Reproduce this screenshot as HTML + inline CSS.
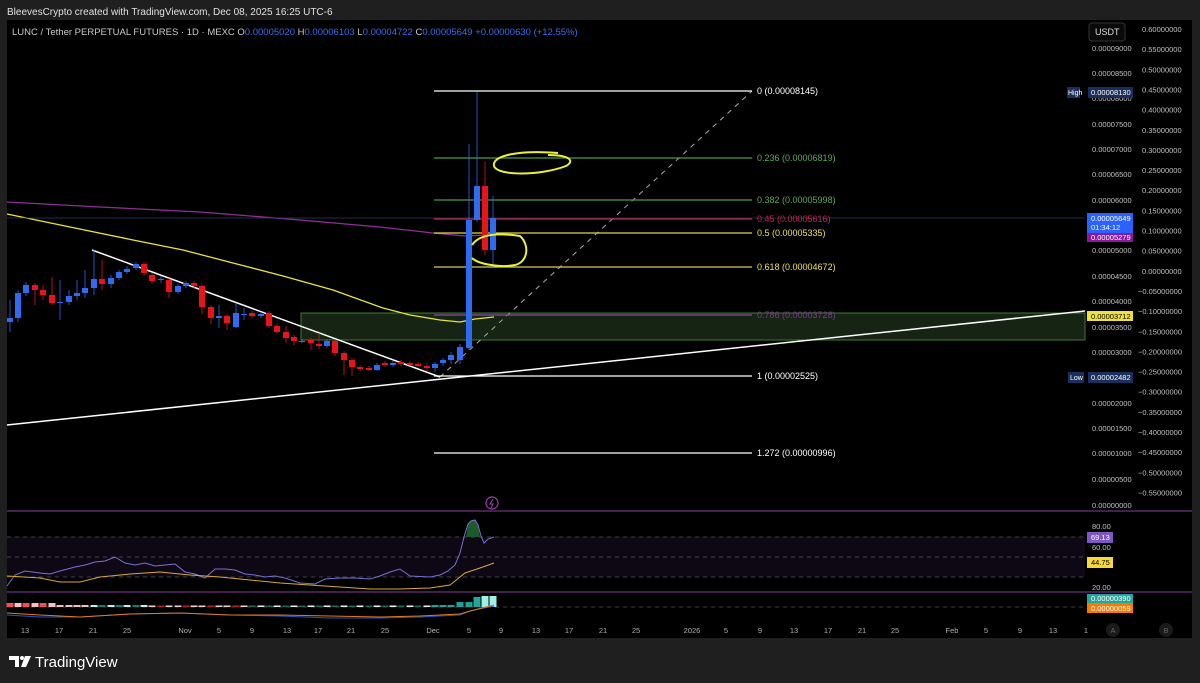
<!DOCTYPE html>
<html><head><meta charset="utf-8"><style>
html,body{margin:0;padding:0;background:#1f1f1f;width:1200px;height:683px;overflow:hidden;font-family:"Liberation Sans",sans-serif}
svg text{font-family:"Liberation Sans",sans-serif}
</style></head><body>
<svg id="s" width="1200" height="683" xmlns="http://www.w3.org/2000/svg">
<rect x="0" y="0" width="1200" height="683" fill="#1f1f1f"/>
<text x="7" y="15" font-size="10" fill="#e0e0e0">BleevesCrypto created with TradingView.com, Dec 08, 2025 16:25 UTC-6</text>
<rect x="7" y="20" width="1185" height="618" fill="#000"/>
<text x="12" y="35" font-size="9.5" fill="#c8c8c8">LUNC / Tether PERPETUAL FUTURES · 1D · MEXC  O<tspan fill="#3a6cf0">0.00005020</tspan>  H<tspan fill="#3a6cf0">0.00006103</tspan>  L<tspan fill="#3a6cf0">0.00004722</tspan>  C<tspan fill="#3a6cf0">0.00005649</tspan>  <tspan fill="#3a6cf0">+0.00000630 (+12.55%)</tspan></text>
<!-- zone -->
<rect x="301" y="313" width="784" height="27" fill="#152413" stroke="#3f7a34" stroke-width="1"/>
<!-- MAs -->
<polyline points="7,214 70,227 133,240 183,250 233,263 283,276 333,290 383,308 410,315 440,320 460,322 475,319 494,317" fill="none" stroke="#e9e43a" stroke-width="1.3"/>
<polyline points="7,202 100,207 200,212 300,220 380,227 433,233 465,236 490,235" fill="none" stroke="#8e2f96" stroke-width="1.3"/>
<line x1="7" y1="218" x2="1085" y2="218" stroke="#2a3b66" stroke-width="0.8"/>
<!-- trendlines -->
<line x1="92" y1="250" x2="440" y2="377" stroke="#fff" stroke-width="1.5"/>
<line x1="7" y1="425" x2="1085" y2="311" stroke="#fff" stroke-width="1.5"/>
<line x1="440" y1="377" x2="752" y2="91" stroke="#aaa" stroke-width="1" stroke-dasharray="5,5"/>
<!-- fib -->
<g stroke-width="1.3">
<line x1="434" y1="91" x2="752" y2="91" stroke="#fff"/>
<line x1="434" y1="158" x2="752" y2="158" stroke="#4e9a4e"/>
<line x1="434" y1="200" x2="752" y2="200" stroke="#4e9a4e"/>
<line x1="434" y1="219" x2="752" y2="219" stroke="#c22656"/>
<line x1="434" y1="233" x2="752" y2="233" stroke="#e2d24a"/>
<line x1="434" y1="267" x2="752" y2="267" stroke="#d9c56a"/>
<line x1="434" y1="315" x2="752" y2="315" stroke="#8b4aa8"/>
<line x1="434" y1="376" x2="752" y2="376" stroke="#fff"/>
<line x1="434" y1="453" x2="752" y2="453" stroke="#fff"/>
</g>
<g font-size="9">
<text x="757" y="94" fill="#fff">0 (0.00008145)</text>
<text x="757" y="161" fill="#5fa85f">0.236 (0.00006819)</text>
<text x="757" y="203" fill="#5fa85f">0.382 (0.00005998)</text>
<text x="757" y="222" fill="#c22656">0.45 (0.00005616)</text>
<text x="757" y="236" fill="#f0e050">0.5 (0.00005335)</text>
<text x="757" y="270" fill="#f0e050">0.618 (0.00004672)</text>
<text x="757" y="318" fill="#7a3a90">0.786 (0.00003728)</text>
<text x="757" y="379" fill="#fff">1 (0.00002525)</text>
<text x="757" y="456" fill="#fff">1.272 (0.00000996)</text>
</g>
<g id="candles"></g>
<!-- yellow drawings -->
<path d="M558,153 C520,150 492,155 494,166 C497,176 540,176 566,166 C575,161 570,155 548,155" fill="none" stroke="#e8f03a" stroke-width="2"/>
<path d="M472,245 C480,233 500,233 520,236 C530,245 528,262 515,265 C500,268 478,264 472,258" fill="none" stroke="#e8f03a" stroke-width="2"/>
<!-- lightning -->
<circle cx="492" cy="503" r="6" fill="none" stroke="#a040b0" stroke-width="1.2"/>
<path d="M493,499 L490,504 L493,504 L491,508" fill="none" stroke="#a040b0" stroke-width="1"/>
<!-- separators -->
<line x1="7" y1="511" x2="1192" y2="511" stroke="#5a2a6a" stroke-width="1.5"/>
<line x1="7" y1="592" x2="1192" y2="592" stroke="#5a2a6a" stroke-width="1.5"/>
<rect x="7" y="537" width="1078" height="40" fill="#0d0814"/>
<g stroke="#555" stroke-dasharray="4,4" stroke-width="0.8">
<line x1="7" y1="537" x2="1085" y2="537"/><line x1="7" y1="557" x2="1085" y2="557"/><line x1="7" y1="577" x2="1085" y2="577"/>
<line x1="7" y1="607" x2="1085" y2="607"/></g>
<path d="M466,537 L468,524 L471,521 L475,520 L478,526 L480,537Z" fill="#1e5a2a"/>
<polyline points="7,586 15,575 25,571 40,573 50,574 60,571 75,567 85,565 95,562 105,561 115,557 125,563 135,565 145,563 155,566 165,565 175,564 185,572 195,574 205,578 215,569 225,569 235,570 245,574 255,575 265,577 275,576 285,578 300,583 315,584 325,579 340,578 355,578 370,579 380,576 390,572 400,569 410,576 430,577 440,575 448,571 455,565 460,553 464,537 468,524 471,521 475,520 478,525 481,536 484,543 488,539 494,537" fill="none" stroke="#7b6fd6" stroke-width="1"/>
<polyline points="7,576 40,578 60,582 80,582 100,577 130,574 160,572 190,575 220,577 250,580 280,583 310,585 340,587 370,589 400,589 430,588 450,585 465,573 480,568 494,563" fill="none" stroke="#d8a838" stroke-width="1"/>
<g id="hist"></g>
<polyline points="7,615 40,617 80,617 130,614 180,613 230,615 280,616 330,618 380,618 420,617 460,615 470,611 494,606" fill="none" stroke="#2a50c0" stroke-width="1"/>
<polyline points="7,613 40,615 80,617 130,614 180,613 230,615 280,615 330,616 380,617 420,616 460,614 470,611 494,605" fill="none" stroke="#e07a20" stroke-width="1"/>
<!-- right axis -->
<g font-size="7.5" fill="#c0c0c0" id="ax1"></g>
<g font-size="7.5" fill="#c0c0c0" id="ax2"></g>
<rect x="1089" y="23" width="36" height="18" rx="3" fill="#0a0a0a" stroke="#333"/>
<text x="1095" y="35" font-size="9" fill="#ddd">USDT</text>
<rect x="1067" y="87" width="13" height="11" fill="#1a2f5c"/><text x="1068" y="95" font-size="7" fill="#fff">High</text>
<rect x="1088" y="87" width="45" height="11" fill="#1a2f5c"/><text x="1091" y="95" font-size="7.5" fill="#fff">0.00008130</text>
<rect x="1068" y="372" width="16" height="11" fill="#1a2f5c"/><text x="1070" y="380" font-size="7" fill="#fff">Low</text>
<rect x="1088" y="372" width="45" height="11" fill="#1a2f5c"/><text x="1091" y="380" font-size="7.5" fill="#fff">0.00002482</text>
<rect x="1087" y="213" width="46" height="20" fill="#2962ff"/><text x="1091" y="221" font-size="7.5" fill="#fff">0.00005649</text><text x="1091" y="230" font-size="7.5" fill="#fff">01:34:12</text>
<rect x="1087" y="233" width="46" height="9" fill="#8a1a9a"/><text x="1091" y="240" font-size="7.5" fill="#fff">0.00005279</text>
<rect x="1087" y="311" width="46" height="10" fill="#f0e040"/><text x="1091" y="319" font-size="7.5" fill="#000">0.00003712</text>
<text x="1092" y="529" font-size="7.5" fill="#c0c0c0">80.00</text>
<rect x="1087" y="532" width="26" height="11" fill="#7e57c2"/><text x="1091" y="540" font-size="7.5" fill="#fff">69.13</text>
<text x="1092" y="550" font-size="7.5" fill="#c0c0c0">60.00</text>
<rect x="1087" y="557" width="26" height="11" fill="#f5d83a"/><text x="1091" y="565" font-size="7.5" fill="#000">44.75</text>
<text x="1092" y="590" font-size="7.5" fill="#c0c0c0">20.00</text>
<rect x="1087" y="594" width="46" height="9" fill="#26a69a"/><text x="1091" y="601" font-size="7.5" fill="#fff">0.00000390</text>
<rect x="1087" y="603" width="46" height="10" fill="#f57c00"/><text x="1091" y="611" font-size="7.5" fill="#fff">0.00000059</text>
<!-- time axis -->
<g font-size="7.5" fill="#b0b0b0" text-anchor="middle" id="tx"></g>
<circle cx="1113" cy="630" r="7" fill="#1a1a1a"/><text x="1113" y="633" font-size="7.5" fill="#666" text-anchor="middle">A</text>
<circle cx="1166" cy="630" r="7" fill="#1a1a1a"/><text x="1166" y="633" font-size="7.5" fill="#666" text-anchor="middle">B</text>
<!-- logo -->
<path d="M9,656 h10 v11 h-4 v-7 h-6z" fill="#fff"/><circle cx="22" cy="658" r="2" fill="#fff"/><path d="M25,656 h6 l-5,11 h-5z" fill="#fff"/>
<text x="35" y="667" font-size="15" fill="#fff">TradingView</text>
</svg>
<script>
var NS="http://www.w3.org/2000/svg";
function el(p,t,a){var e=document.createElementNS(NS,t);for(var k in a)e.setAttribute(k,a[k]);document.getElementById(p).appendChild(e);return e;}
var B="#2f6bf0",R="#e8141a";
var c=[[10,318,322,300,332,B],[18,293,318,290,322,B],[26,285,293,282,296,B],[35,285,290,283,305,R],[43,290,295,285,300,R],[52,295,303,277,305,R],[60,302,303,280,320,B],[69,296,302,290,305,B],[77,293,296,280,300,B],[85,288,293,270,298,B],[94,279,288,250,295,B],[102,279,284,260,290,R],[111,278,284,275,288,B],[119,272,278,270,280,B],[127,269,272,266,274,B],[136,264,268,262,270,B],[144,264,273,262,276,R],[152,275,281,273,284,R],[161,279,280,276,283,B],[169,280,292,278,298,R],[178,286,292,284,294,B],[186,283,286,281,288,B],[194,283,286,281,289,R],[202,286,307,284,314,R],[211,307,318,305,324,R],[219,316,318,305,328,B],[227,316,323,314,330,R],[236,313,327,303,328,B],[244,314,315,308,320,B],[252,313,316,311,318,R],[261,314,316,312,318,B],[269,313,326,311,328,R],[277,326,332,324,334,R],[286,332,338,326,343,R],[294,337,341,335,345,R],[302,341,342,339,343,B],[311,340,343,338,350,R],[319,344,346,333,349,R],[327,341,346,339,348,B],[335,341,353,339,356,R],[344,353,360,351,375,R],[352,360,367,358,376,R],[360,367,369,365,371,R],[369,368,370,366,371,R],[377,365,370,363,371,B],[385,363,365,361,367,R],[393,363,365,361,367,B],[401,362,364,360,366,R],[410,363,365,361,366,R],[418,364,366,362,367,R],[427,366,368,363,371,R],[435,364,368,362,372,B],[443,360,363,358,366,B],[451,355,360,352,364,B],[460,347,360,344,364,B],[469,220,348,144,350,B],[477,186,220,92,222,B],[485,186,250,162,255,R],[493,218,250,196,265,B]];
c.forEach(function(d){el("candles","line",{x1:d[0],x2:d[0],y1:d[3],y2:d[4],stroke:d[5],"stroke-width":0.8});el("candles","rect",{x:d[0]-3,y:d[1],width:6,height:Math.max(1,d[2]-d[1]),fill:d[5]});});
for(var i=0;i<c.length;i++){var x=c[i][0],h,col;if(x<60){h=4;col=i%2?"#f4c0c0":"#f05050"}else if(x<90){h=2;col="#f0c0c0"}else if(x<150){h=2;col=i%2?"#1b7a6a":"#c0f0e8"}else if(x<250){h=1.5;col=i%3?"#f0d0d0":"#b02020"}else if(x<430){h=1.5;col=i%2?"#1b6a5a":"#eee"}else{h=x<460?2:(x<470?5:(x<480?10:11));col=x<470?"#1ba39a":(x<485?"#26a69a":"#a0f0e8")}el("hist","rect",{x:x-3.5,y:607-h,width:7,height:h,fill:col});}
var l1=[["0.00009000",48],["0.00008500",73],["0.00008000",98],["0.00007500",124],["0.00007000",149],["0.00006500",174],["0.00006000",200],["0.00005000",250],["0.00004500",276],["0.00004000",301],["0.00003500",327],["0.00003000",352],["0.00002000",403],["0.00001500",428],["0.00001000",453],["0.00000500",479],["0.00000000",505]];
l1.forEach(function(a){el("ax1","text",{x:1092,y:a[1]+3}).textContent=a[0];});
var v=[".60",".55",".50",".45",".40",".35",".30",".25",".20",".15",".10",".05",".00","-.05","-.10","-.15","-.20","-.25","-.30","-.35","-.40","-.45","-.50","-.55"];
v.forEach(function(s,i){var t=s.charAt(0)=="-"?"\u22120"+s.slice(1):"0"+s;el("ax2","text",{x:1142+(s.charAt(0)=="-"?-4:0),y:32+i*20.15}).textContent=t+"000000";});
var tx=[["13",25],["17",59],["21",93],["25",127],["Nov",185],["5",219],["9",252],["13",287],["17",318],["21",351],["25",385],["Dec",433],["5",469],["9",501],["13",536],["17",569],["21",603],["25",636],["2026",692],["5",726],["9",760],["13",794],["17",828],["21",862],["25",895],["Feb",952],["5",986],["9",1020],["13",1053],["1",1086]];
tx.forEach(function(a){el("tx","text",{x:a[1],y:633}).textContent=a[0];});
</script>
</body></html>
